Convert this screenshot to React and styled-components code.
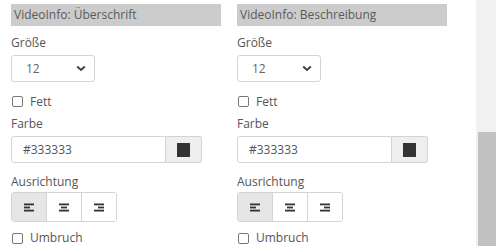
import styled, { createGlobalStyle } from "styled-components";

const GlobalStyle = createGlobalStyle`
	html, body {
		margin: 0;
		padding: 0;
		background: #fff;
		overflow: hidden;
	}
	body {
		font-family: "Open Sans", "Noto Sans", sans-serif;
		color: #555;
	}
`;

const sections = [
	{ title: "VideoInfo: Überschrift", size: 12, color: "#333333" },
	{ title: "VideoInfo: Beschreibung", size: 12, color: "#333333" },
];

const Chevron = () => (
	<svg width="10" height="7" viewBox="0 0 10 7">
		<path d="M1.2 1.5 L5 5 L8.8 1.5" fill="none" stroke="#444" strokeWidth="2" />
	</svg>
);

// three bars, the short middle one moves with the alignment
const AlignIcon = ({ mode }) => (
	<svg width="12" height="9" viewBox="0 0 12 9">
		<rect x="1" y="0.5" width="10" height="1.8" fill="#333" />
		<rect x={mode === "left" ? 1 : mode === "center" ? 3 : 5} y="3.6" width="6" height="1.8" fill="#333" />
		<rect x="1" y="6.7" width="10" height="1.8" fill="#333" />
	</svg>
);

const Page = () => {
	return (
		<Screen>
			<GlobalStyle />
			<Columns>
				{sections.map((s) => (
					<Column key={s.title}>
						<Header>{s.title}</Header>
						<Label $top={9}>Größe</Label>
						<Select>
							<span>{s.size}</span>
							<Chevron />
						</Select>
						<Check $top={12}>
							<Box />
							Fett
						</Check>
						<Label $top={6}>Farbe</Label>
						<ColorRow>
							<ColorInput>{s.color}</ColorInput>
							<Swatch>
								<Square $color={s.color} />
							</Swatch>
						</ColorRow>
						<Label $top={11}>Ausrichtung</Label>
						<Group>
							{["left", "center", "right"].map((m, i) => (
								<AlignButton key={m} $active={i === 0}>
									<AlignIcon mode={m} />
								</AlignButton>
							))}
						</Group>
						<Check $top={8}>
							<Box />
							Umbruch
						</Check>
					</Column>
				))}
			</Columns>
			<Track>
				<Thumb />
			</Track>
		</Screen>
	);
};

const Screen = styled.div`
	display: flex;
	width: 496px;
	height: 246px;
	overflow: hidden;
`;

const Columns = styled.div`
	flex: 1;
	display: flex;
	gap: 16px;
	padding: 4px 0 0 11px;
`;

const Column = styled.div`
	width: 210px;
	display: flex;
	flex-direction: column;
	align-items: flex-start;
`;

const Header = styled.div`
	align-self: stretch;
	height: 22px;
	line-height: 22px;
	background: #cccccc;
	color: #5a5a5a;
	font-size: 12px;
	padding-left: 3px;
`;

const Label = styled.div`
	font-size: 12px;
	color: #555;
	line-height: 16px;
	margin-top: ${(p) => p.$top}px;
`;

const Select = styled.div`
	margin-top: 4px;
	width: 84px;
	height: 27px;
	box-sizing: border-box;
	border: 1px solid #d4d4d4;
	border-radius: 3px;
	display: flex;
	align-items: center;
	justify-content: space-between;
	padding: 0 8px 0 14px;
	font-size: 12px;
	color: #666;
`;

const Check = styled.label`
	margin-top: ${(p) => p.$top}px;
	display: flex;
	align-items: center;
	gap: 7px;
	font-size: 12px;
	color: #555;
	line-height: 16px;
`;

const Box = styled.span`
	width: 9px;
	height: 9px;
	border: 1px solid #777;
	border-radius: 2px;
	margin-left: 1px;
`;

const ColorRow = styled.div`
	margin-top: 4px;
	display: flex;
	height: 28px;
`;

const ColorInput = styled.div`
	width: 155px;
	box-sizing: border-box;
	border: 1px solid #d4d4d4;
	border-radius: 3px 0 0 3px;
	display: flex;
	align-items: center;
	padding-left: 11px;
	font-size: 12px;
	color: #555;
`;

const Swatch = styled.div`
	width: 36px;
	box-sizing: border-box;
	background: #eeeeee;
	border: 1px solid #d4d4d4;
	border-left: none;
	border-radius: 0 3px 3px 0;
	display: flex;
	align-items: center;
	justify-content: center;
`;

const Square = styled.span`
	width: 13px;
	height: 14px;
	background: ${(p) => p.$color};
`;

const Group = styled.div`
	margin-top: 2px;
	display: flex;
	height: 28px;
	border: 1px solid #d4d4d4;
	border-radius: 3px;
	overflow: hidden;
`;

const AlignButton = styled.div`
	width: 34px;
	display: flex;
	align-items: center;
	justify-content: center;
	background: ${(p) => (p.$active ? "#e6e6e6" : "#fff")};
	& + & {
		border-left: 1px solid #d4d4d4;
	}
`;

const Track = styled.div`
	width: 20px;
	height: 246px;
	background: #f1f1f1;
	display: flex;
	flex-direction: column;
	justify-content: flex-end;
	padding-left: 2px;
	box-sizing: border-box;
`;

const Thumb = styled.div`
	height: 114px;
	background: #c1c1c1;
`;

export default Page;
